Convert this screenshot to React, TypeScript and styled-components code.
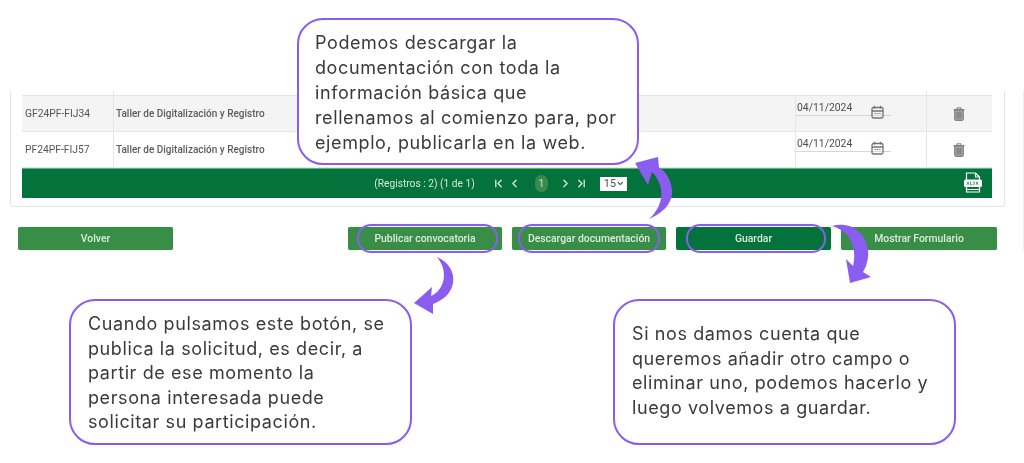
import styled, { createGlobalStyle } from "styled-components";
import { ChevronFirst, ChevronLast, ChevronLeft, ChevronRight, ChevronDown } from "lucide-react";

const PURPLE = "#8b5cf0";

const GlobalStyle = createGlobalStyle`
  html, body { margin: 0; padding: 0; background: #fff; }
  body { font-family: "Roboto", "Liberation Sans", sans-serif; }
`;

const rows = [
  { code: "GF24PF-FIJ34", name: "Taller de Digitalización y Registro", date: "04/11/2024", shaded: true },
  { code: "PF24PF-FIJ57", name: "Taller de Digitalización y Registro", date: "04/11/2024", shaded: false },
];

function CalendarIcon() {
  return (
    <svg width="13" height="14" viewBox="0 0 13 14" fill="none" stroke="#77716c" strokeWidth="1.3">
      <rect x="1" y="2.5" width="11" height="10.5" rx="1.5" />
      <path d="M1 6h11M3.5 .8v2.6M9.5 .8v2.6" />
      <path d="M3.5 8.5h6" strokeDasharray="1.4 1" strokeWidth="1" />
    </svg>
  );
}

function TrashIcon() {
  return (
    <svg width="12" height="14" viewBox="0 0 12 14" fill="#8b8987" stroke="#7d7b79" strokeWidth="1">
      <path d="M.5 2.6h11M4 2.4V.8h4v1.6" fill="none" />
      <path d="M1.7 3h8.6v9.4a1 1 0 0 1-1 1H2.7a1 1 0 0 1-1-1z" fill="#a5a3a1" />
      <path d="M4.2 5v6.5M6 5v6.5M7.8 5v6.5" stroke="#6f6d6b" strokeWidth=".8" />
    </svg>
  );
}

function XlsxIcon() {
  return (
    <svg width="18" height="21" viewBox="0 0 18 21" fill="none" stroke="#fff" strokeWidth="1.2">
      <path d="M2.5 8V1h9l4 4v3M11.5 1v4h4" />
      <rect x=".6" y="8" width="16.8" height="6.5" rx="1" fill="#fff" />
      <path d="M2.5 14.5V20h13v-5.5M2.5 17.5h13" />
      <path d="M3 9.8l2 3M5 9.8l-2 3M6.6 9.6v3.2h1.7M11 10c-1.4-.6-2 .5-1 1.1s.6 1.8-1 1.2M12 9.8l2 3M14 9.8l-2 3" stroke="#04733b" strokeWidth=".7" />
    </svg>
  );
}

export default function App() {
  return (
    <Page>
      <GlobalStyle />
      <SideRule />
      <Card>
        <Table>
          <CutRow>
            <span /><span /><span /><span />
          </CutRow>
          {rows.map((row) => (
            <Row key={row.code} $shaded={row.shaded}>
              <Code>{row.code}</Code>
              <Name>{row.name}</Name>
              <DateCell>
                <DateField>
                  <span>{row.date}</span>
                  <CalendarSlot><CalendarIcon /></CalendarSlot>
                </DateField>
              </DateCell>
              <ActionCell><Soft><TrashIcon /></Soft></ActionCell>
            </Row>
          ))}
          <Footer>
            <Pager>
              <Records>(Registros : 2) (1 de 1)</Records>
              <PagerIcons>
                <ChevronFirst size={13} strokeWidth={2.4} />
                <ChevronLeft size={13} strokeWidth={2.4} />
              </PagerIcons>
              <PageBadge>1</PageBadge>
              <PagerIcons>
                <ChevronRight size={13} strokeWidth={2.4} />
                <ChevronLast size={13} strokeWidth={2.4} />
              </PagerIcons>
              <PageSize>15<ChevronDown size={9} strokeWidth={3.5} /></PageSize>
            </Pager>
            <Export><XlsxIcon /></Export>
          </Footer>
        </Table>
      </Card>

      <Actions>
        <ActionButton $width={155}><Soft>Volver</Soft></ActionButton>
        <RightActions>
          <ActionButton $width={154}>
            <Soft>Publicar convocatoria</Soft>
            <Ring $left={9} $right={4} />
          </ActionButton>
          <ActionButton $width={154}>
            <Soft>Descargar documentación</Soft>
            <Ring $left={6} $right={6} />
          </ActionButton>
          <ActionButton $width={155} $dark>
            <Soft>Guardar</Soft>
            <Ring $left={10} $right={5} />
          </ActionButton>
          <ActionButton $width={156}><Soft>Mostrar Formulario</Soft></ActionButton>
        </RightActions>
      </Actions>

      <TopNote>
        <NoteText>
          Podemos descargar la<br />
          documentación con toda la<br />
          información básica que<br />
          rellenamos al comienzo para, por<br />
          ejemplo, publicarla en la web.
        </NoteText>
      </TopNote>

      <Notes>
        <Note $top={11} $left={17}>
          <NoteText>
            Cuando pulsamos este botón, se<br />
            publica la solicitud, es decir, a<br />
            partir de ese momento la<br />
            persona interesada puede<br />
            solicitar su participación.
          </NoteText>
        </Note>
        <Note $top={21} $left={17}>
          <NoteText>
            Si nos damos cuenta que<br />
            queremos añadir otro campo o<br />
            eliminar uno, podemos hacerlo y<br />
            luego volvemos a guardar.
          </NoteText>
        </Note>
      </Notes>

      <Arrow viewBox="0 0 1024 463">
        <path d="M649 219C663 213 673 203 672 190C671 179 665 170 659 168L658 157L635 163L648 185L652 172C664 184 666 204 649 219Z" />
        <path d="M437 257C449 262 455 273 453 283C451 294 443 300 433 304L433 314L414 303L432 287L431 296C443 291 450 273 437 257Z" />
        <path d="M832 226C850 221 866 232 868 250C869 259 866 267 863 272L871 277L850 283L846 259L853 266C857 250 852 232 832 226Z" />
      </Arrow>
    </Page>
  );
}

const Page = styled.div`
  position: relative;
  width: 1024px;
  height: 463px;
  overflow: hidden;
  background: #fff;
  padding-top: 91px;
  box-sizing: border-box;
`;

const SideRule = styled.div`
  position: absolute;
  right: 0;
  top: 90px;
  width: 1px;
  height: 160px;
  background: #eeeeee;
`;

const Soft = styled.span`
  display: inline-flex;
  filter: blur(0.35px);
`;

const Card = styled.div`
  margin-left: 10px;
  width: 995px;
  height: 116px;
  box-sizing: border-box;
  padding-left: 11px;
  border: 1px solid #e6e6e6;
  border-top: none;
  border-radius: 0 0 3px 3px;
`;

const Table = styled.div`
  width: 970px;
`;

const COLUMNS = "92px 681px 132px 65px";

const CutRow = styled.div`
  display: grid;
  grid-template-columns: ${COLUMNS};
  height: 4px;
  border-bottom: 1px solid #e4e4e4;
  span { border-right: 1px solid #e4e4e4; }
  span:nth-child(2) { border-right: none; }
  span:last-child { border-right: none; }
`;

const Row = styled.div<{ $shaded: boolean }>`
  display: grid;
  grid-template-columns: ${COLUMNS};
  height: 36px;
  box-sizing: border-box;
  border-bottom: 1px solid #e6e6e6;
  background: ${(p) => (p.$shaded ? "#f4f4f4" : "#fff")};
  color: #555;
  font-size: 10px;
  align-items: center;
`;

const Code = styled.div`
  height: 100%;
  display: flex;
  align-items: center;
  padding-left: 3px;
  border-right: 1px solid #e6e6e6;
  filter: blur(0.35px);
  font-size: 10.3px;
`;

const Name = styled.div`
  padding-left: 2px;
  filter: blur(0.35px);
  font-size: 10px;
  font-weight: 500;
  color: #5c5c5c;
`;

const DateCell = styled.div`
  height: 100%;
  border-left: 1px solid #e6e6e6;
  border-right: 1px solid #e6e6e6;
  box-sizing: border-box;
`;

const DateField = styled.div`
  display: flex;
  margin-top: 5px;
  height: 14px;
  width: 94px;
  padding-left: 1px;
  border-bottom: 1px solid #d6d6d6;
  font-size: 10.4px;
  color: #4e4e4e;
  filter: blur(0.3px);
  position: relative;
`;

const CalendarSlot = styled.span`
  position: absolute;
  left: 75px;
  top: 4px;
  background: transparent;
`;

const ActionCell = styled.div`
  display: flex;
  justify-content: center;
  align-items: center;
  padding-right: 2px;
`;

const Footer = styled.div`
  height: 30px;
  background: #04733b;
  border-top: 1px solid #58b384;
  box-sizing: border-box;
  position: relative;
  display: flex;
  justify-content: center;
  align-items: center;
`;

const Pager = styled.div`
  display: flex;
  align-items: center;
  color: #d5e8da;
  font-size: 10.2px;
  margin-right: 13px;
  filter: blur(0.3px);
`;

const Records = styled.span`
  margin-right: 17px;
`;

const PagerIcons = styled.span`
  display: inline-flex;
  gap: 3px;
  color: #d5ebdd;
`;

const PageBadge = styled.span`
  width: 13px;
  height: 17px;
  margin: 0 11px 0 14px;
  border-radius: 7px;
  background: #3a8a4e;
  display: flex;
  align-items: center;
  justify-content: center;
  font-size: 10px;
  color: #c9e2cf;
`;

const PageSize = styled.span`
  width: 27px;
  height: 14px;
  margin-left: 12px;
  box-sizing: border-box;
  padding: 0 2px 0 4px;
  background: #fff;
  color: #555;
  font-size: 11px;
  display: flex;
  align-items: center;
  justify-content: space-between;
`;

const Export = styled.span`
  position: absolute;
  right: 10px;
  top: 3px;
  display: flex;
  filter: blur(0.3px);
`;

const Actions = styled.div`
  display: flex;
  justify-content: space-between;
  width: 979px;
  margin: 20px 0 0 18px;
`;

const RightActions = styled.div`
  display: flex;
  gap: 10px;
`;

const ActionButton = styled.div<{ $width: number; $dark?: boolean }>`
  position: relative;
  width: ${(p) => p.$width}px;
  height: 23px;
  box-sizing: border-box;
  display: flex;
  align-items: center;
  justify-content: center;
  border-radius: 2px;
  background: ${(p) => (p.$dark ? "#04733b" : "#388e47")};
  color: #dcebdd;
  font-size: 10.4px;
  font-weight: 500;
  box-shadow: 0 0 1px rgba(0, 0, 0, 0.35);
`;

const Ring = styled.span<{ $left: number; $right: number }>`
  position: absolute;
  top: -3px;
  bottom: -3px;
  left: ${(p) => p.$left}px;
  right: ${(p) => p.$right}px;
  border: 2px solid ${PURPLE};
  border-radius: 14px;
`;

const NoteText = styled.div`
  filter: blur(0.3px);
`;

const noteText = `
  box-sizing: border-box;
  background: #fff;
  border: 2px solid ${PURPLE};
  border-radius: 26px;
  color: #3a3a3a;
  font-family: "Inter", "Open Sans", sans-serif;
  font-size: 18px;
  letter-spacing: 0.6px;
`;

const TopNote = styled.div`
  ${noteText}
  position: absolute;
  left: 297px;
  top: 18px;
  width: 342px;
  height: 147px;
  line-height: 25px;
  padding: 10px 0 0 16px;
`;

const Notes = styled.div`
  display: flex;
  justify-content: space-between;
  width: 887px;
  margin: 49px 0 0 69px;
`;

const Note = styled.div<{ $top: number; $left: number }>`
  ${noteText}
  width: 343px;
  height: 146px;
  line-height: 24.6px;
  padding: ${(p) => p.$top}px 0 0 ${(p) => p.$left}px;
`;

const Arrow = styled.svg`
  position: absolute;
  inset: 0;
  width: 1024px;
  height: 463px;
  fill: ${PURPLE};
  pointer-events: none;
`;
